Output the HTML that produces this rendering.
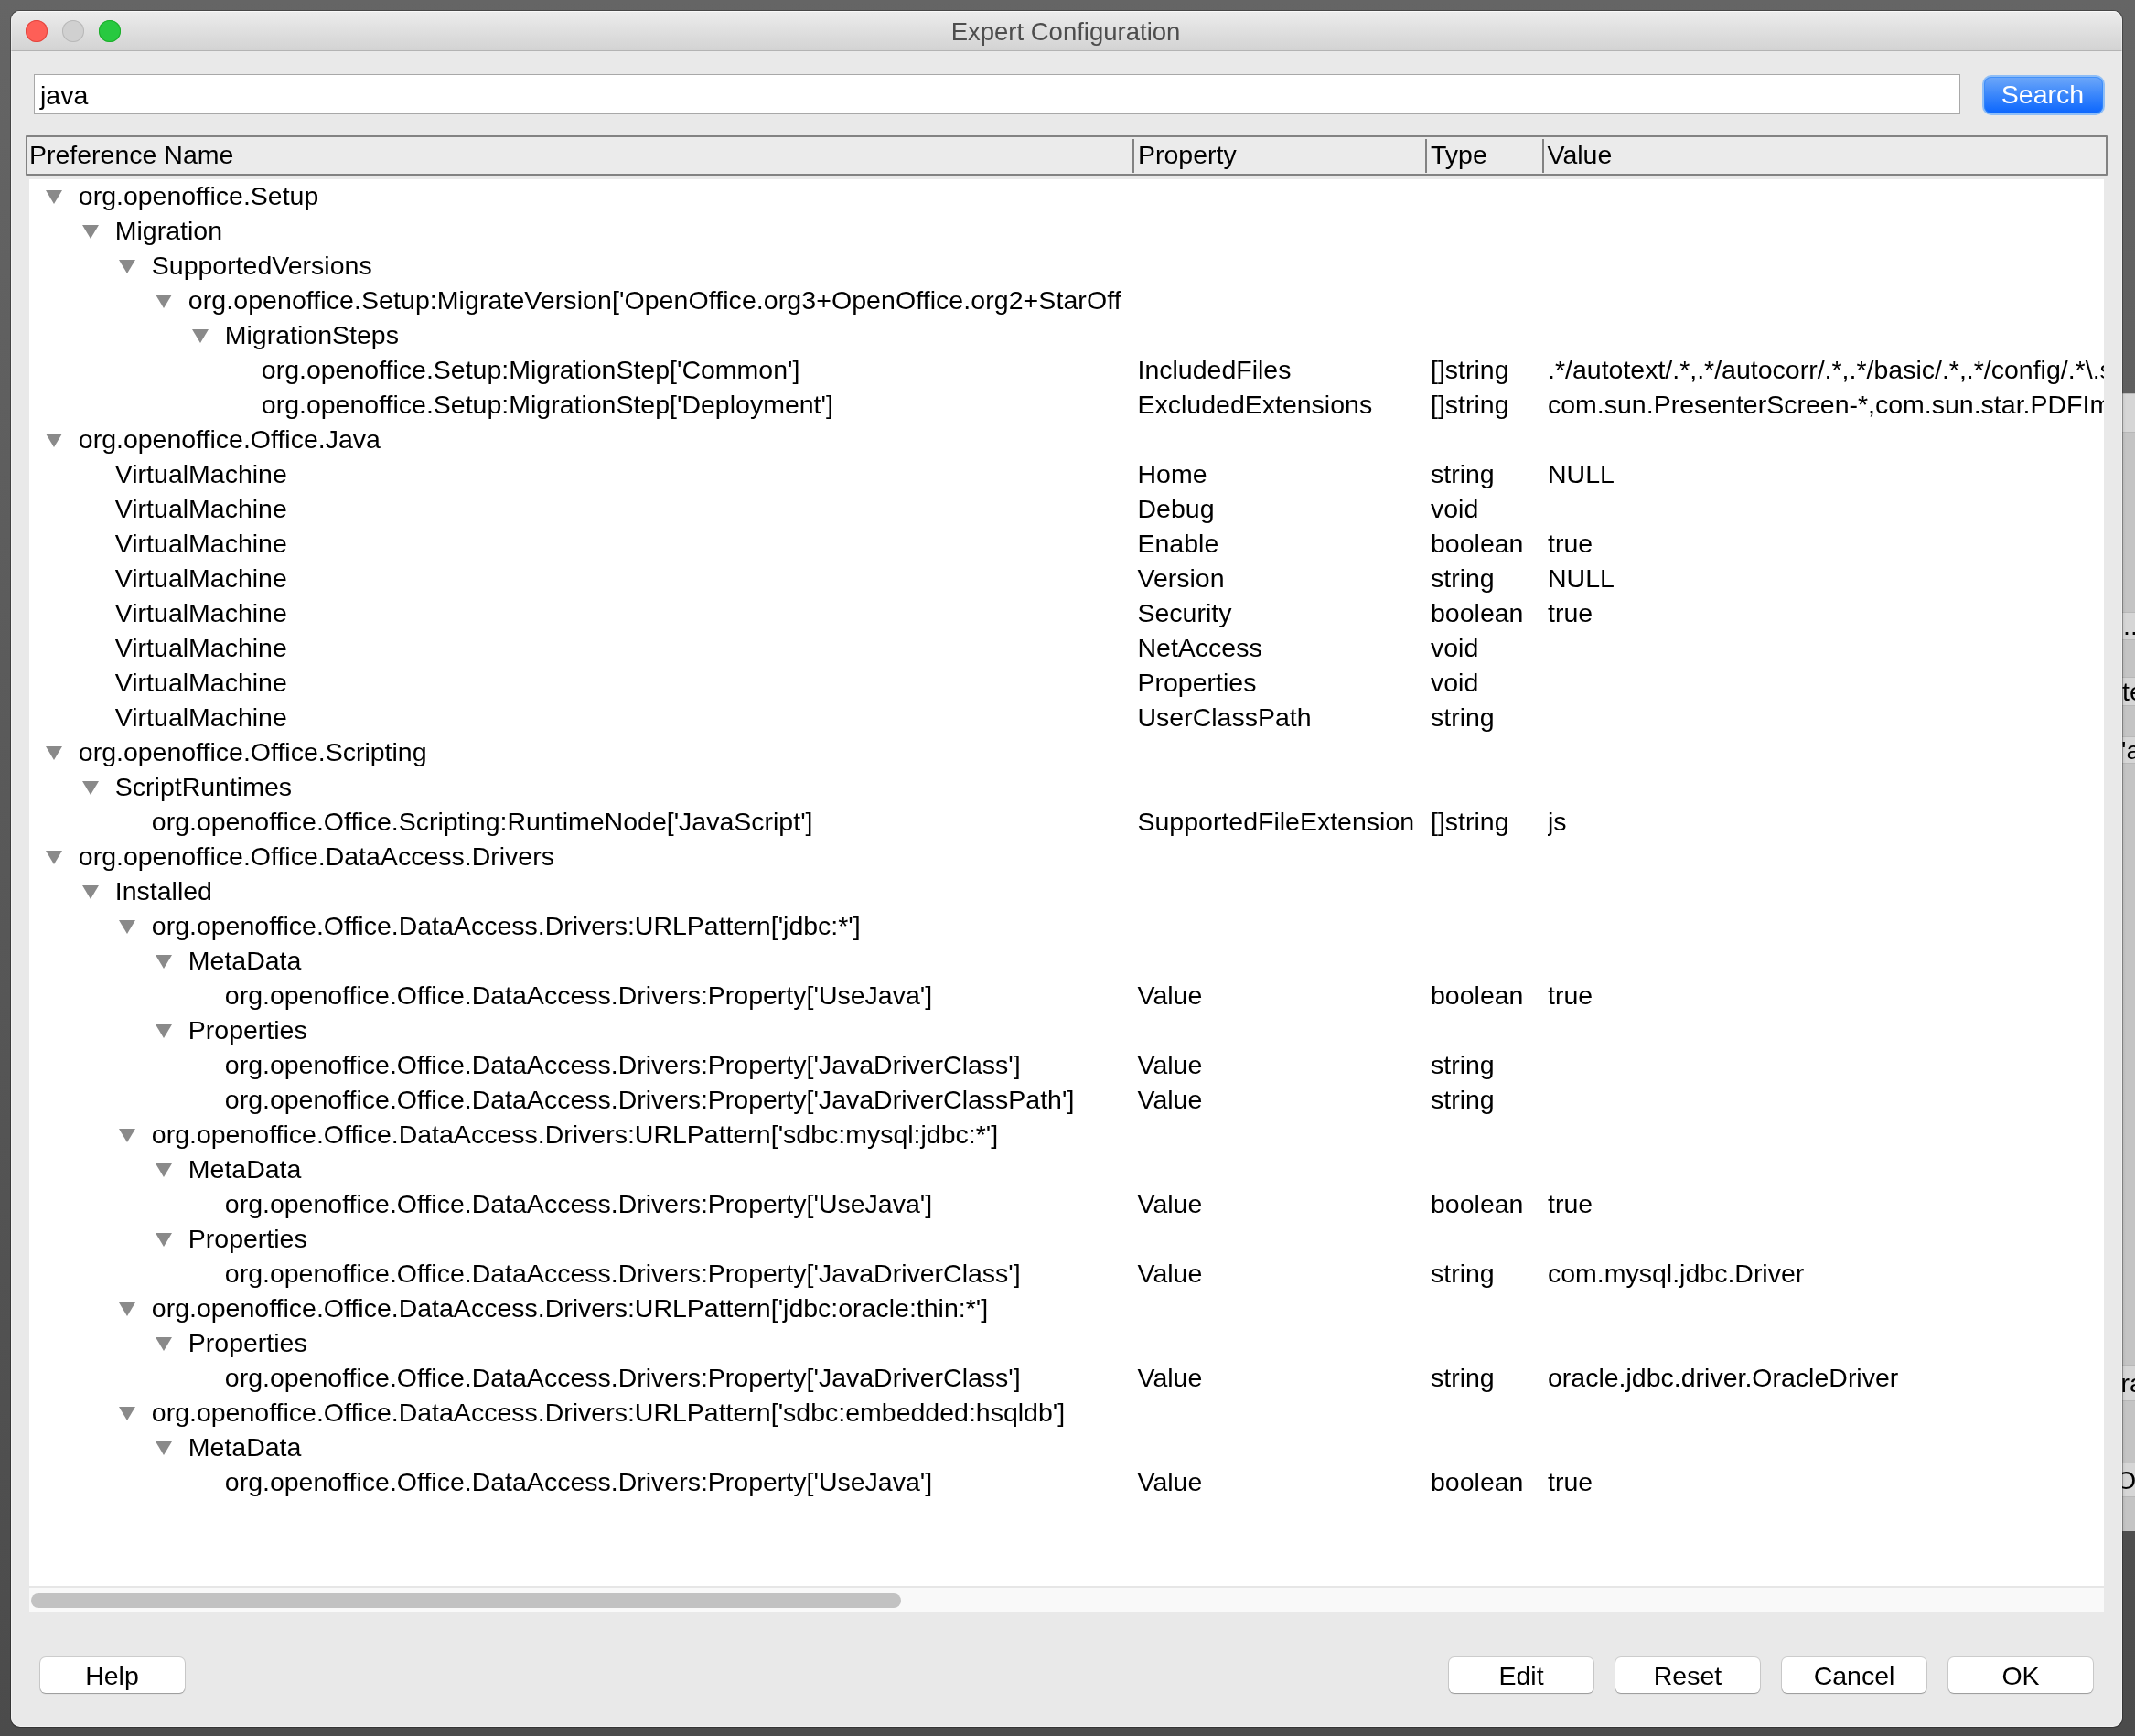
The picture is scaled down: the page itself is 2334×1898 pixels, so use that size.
<!DOCTYPE html>
<html><head><meta charset="utf-8"><style>
*{margin:0;padding:0;box-sizing:border-box}
html,body{width:2334px;height:1898px;overflow:hidden}
body{will-change:transform;position:relative;background:linear-gradient(#656565,#4b4b4b);font-family:"Liberation Sans",sans-serif;color:#000}
.a{position:absolute}
#win{will-change:transform;position:absolute;left:12px;top:12px;width:2308px;height:1876px;border-radius:10px;background:#e9e9e9;box-shadow:0 0 0 1px rgba(0,0,0,.3);overflow:hidden}
#tb{position:absolute;left:0;top:0;width:2308px;height:44px;background:linear-gradient(#ececec,#d3d3d3);border-bottom:1px solid #b3b3b3;box-shadow:inset 0 1px 0 #f6f6f6}
.tl{position:absolute;top:10px;width:24px;height:24px;border-radius:50%}
#title{position:absolute;left:-1px;width:2308px;top:1px;text-align:center;font-size:27.5px;color:#4d4d4d;line-height:44px;white-space:pre}
.txt{position:absolute;white-space:pre;font-size:28.5px;line-height:38px;height:38px}
.tri{position:absolute;width:0;height:0;border-left:9px solid transparent;border-right:9px solid transparent;border-top:15.5px solid #8a8a8a}
.btn{position:absolute;top:1800px;width:158px;height:39px;padding-top:1px;border-radius:6px;background:#fff;box-shadow:0 0 0 1px rgba(0,0,0,0.12),0 1px 1px rgba(0,0,0,0.25);font-size:28.5px;line-height:39px;text-align:center;white-space:pre}
</style></head><body>

<div class="a" style="left:2300px;top:430px;width:34px;height:1244px;background:#c4c4c4"></div>
<div class="a" style="left:2300px;top:430px;width:34px;height:43px;background:#d6d6d6;border-top:1px solid #b8b8b8;border-bottom:1px solid #b8b8b8"></div>
<div class="a" style="left:2300px;top:669px;width:34px;height:31px;background:#d6d6d6;border-top:1px solid #b8b8b8;border-bottom:1px solid #b8b8b8"></div>
<div class="txt" style="left:2321px;top:665.0px">...</div>
<div class="a" style="left:2300px;top:740px;width:34px;height:32px;background:#d6d6d6;border-top:1px solid #b8b8b8;border-bottom:1px solid #b8b8b8"></div>
<div class="txt" style="left:2320px;top:736.5px">te</div>
<div class="a" style="left:2300px;top:805px;width:34px;height:30px;background:#d6d6d6;border-top:1px solid #b8b8b8;border-bottom:1px solid #b8b8b8"></div>
<div class="txt" style="left:2319px;top:800.5px">'a</div>
<div class="a" style="left:2300px;top:1492px;width:34px;height:40px;background:#d6d6d6;border-top:1px solid #b8b8b8;border-bottom:1px solid #b8b8b8"></div>
<div class="txt" style="left:2318.5px;top:1492.5px">ra</div>
<div class="a" style="left:2300px;top:1599px;width:34px;height:38px;background:#d6d6d6;border-top:1px solid #b8b8b8;border-bottom:1px solid #b8b8b8"></div>
<div class="txt" style="left:2313px;top:1598.5px">O</div>
<div class="a" style="left:2320px;top:430px;width:4px;height:1244px;background:linear-gradient(90deg,rgba(0,0,0,.08),rgba(0,0,0,0))"></div>
<div id="win">
<div id="tb"><div class="tl" style="left:16px;background:#fe5f57;box-shadow:inset 0 0 0 1px #e2463f"></div><div class="tl" style="left:56px;background:#d0d0d0;box-shadow:inset 0 0 0 1px #b8b8b8"></div><div class="tl" style="left:96px;background:#28c940;box-shadow:inset 0 0 0 1px #1dad2b"></div><div id="title">Expert Configuration</div></div>
<div class="a" style="left:25px;top:69px;width:2106px;height:44px;background:#fff;border:1px solid #a8a8a8"></div>
<div class="txt" style="left:32px;top:73px">java</div>
<div class="a" style="left:2155px;top:70px;width:134px;height:44px;border-radius:10px;background:#8fbef7;padding:2px"><div style="width:130px;height:40px;border-radius:8px;background:linear-gradient(#6ea8f9,#3a86fb 50%,#0b66fe);color:#fff;font-size:28.5px;line-height:38px;text-align:center;text-indent:-2px;box-shadow:inset 0 0 0 1px rgba(50,135,250,.7)">Search</div></div>
<div class="a" style="left:16px;top:136px;width:2276px;height:44px;background:#ebebeb;border:2px solid #828282;border-radius:1px"></div>
<div class="a" style="left:1225.8px;top:139.5px;width:2px;height:37px;background:#828282"></div>
<div class="a" style="left:1545.8px;top:139.5px;width:2px;height:37px;background:#828282"></div>
<div class="a" style="left:1673.6px;top:139.5px;width:2px;height:37px;background:#828282"></div>
<div class="txt" style="left:20px;top:138px">Preference Name</div>
<div class="txt" style="left:1232px;top:138px">Property</div>
<div class="txt" style="left:1552px;top:138px">Type</div>
<div class="txt" style="left:1679.5px;top:138px">Value</div>
<div class="a" style="left:20px;top:183.6px;width:2268px;height:1538.4px;background:#fff;overflow:hidden">
<div class="tri" style="left:18px;top:12.400000000000006px"></div>
<div class="txt" style="left:53.8px;top:-0.5999999999999943px;width:1140.2px;overflow:hidden;">org.openoffice.Setup</div>
<div class="tri" style="left:58px;top:50.400000000000006px"></div>
<div class="txt" style="left:93.8px;top:37.400000000000006px;width:1100.2px;overflow:hidden;">Migration</div>
<div class="tri" style="left:98px;top:88.4px"></div>
<div class="txt" style="left:133.8px;top:75.4px;width:1060.2px;overflow:hidden;">SupportedVersions</div>
<div class="tri" style="left:138px;top:126.4px"></div>
<div class="txt" style="left:173.8px;top:113.4px;width:1020.2px;overflow:hidden;letter-spacing:0.075px;">org.openoffice.Setup:MigrateVersion[&#x27;OpenOffice.org3+OpenOffice.org2+StarOff</div>
<div class="tri" style="left:178px;top:164.4px"></div>
<div class="txt" style="left:213.8px;top:151.4px;width:980.2px;overflow:hidden;">MigrationSteps</div>
<div class="txt" style="left:253.8px;top:189.4px;width:940.2px;overflow:hidden;">org.openoffice.Setup:MigrationStep[&#x27;Common&#x27;]</div>
<div class="txt" style="left:1211.5px;top:189.4px">IncludedFiles</div>
<div class="txt" style="left:1532px;top:189.4px">[]string</div>
<div class="txt" style="left:1660px;top:189.4px;width:608px;overflow:hidden">.*/autotext/.*,.*/autocorr/.*,.*/basic/.*,.*/config/.*\.soc,.*/config/.*\.sod</div>
<div class="txt" style="left:253.8px;top:227.4px;width:940.2px;overflow:hidden;">org.openoffice.Setup:MigrationStep[&#x27;Deployment&#x27;]</div>
<div class="txt" style="left:1211.5px;top:227.4px">ExcludedExtensions</div>
<div class="txt" style="left:1532px;top:227.4px">[]string</div>
<div class="txt" style="left:1660px;top:227.4px;width:608px;overflow:hidden">com.sun.PresenterScreen-*,com.sun.star.PDFImport-*</div>
<div class="tri" style="left:18px;top:278.4px"></div>
<div class="txt" style="left:53.8px;top:265.4px;width:1140.2px;overflow:hidden;">org.openoffice.Office.Java</div>
<div class="txt" style="left:93.8px;top:303.4px;width:1100.2px;overflow:hidden;">VirtualMachine</div>
<div class="txt" style="left:1211.5px;top:303.4px">Home</div>
<div class="txt" style="left:1532px;top:303.4px">string</div>
<div class="txt" style="left:1660px;top:303.4px;width:608px;overflow:hidden">NULL</div>
<div class="txt" style="left:93.8px;top:341.4px;width:1100.2px;overflow:hidden;">VirtualMachine</div>
<div class="txt" style="left:1211.5px;top:341.4px">Debug</div>
<div class="txt" style="left:1532px;top:341.4px">void</div>
<div class="txt" style="left:93.8px;top:379.4px;width:1100.2px;overflow:hidden;">VirtualMachine</div>
<div class="txt" style="left:1211.5px;top:379.4px">Enable</div>
<div class="txt" style="left:1532px;top:379.4px">boolean</div>
<div class="txt" style="left:1660px;top:379.4px;width:608px;overflow:hidden">true</div>
<div class="txt" style="left:93.8px;top:417.4px;width:1100.2px;overflow:hidden;">VirtualMachine</div>
<div class="txt" style="left:1211.5px;top:417.4px">Version</div>
<div class="txt" style="left:1532px;top:417.4px">string</div>
<div class="txt" style="left:1660px;top:417.4px;width:608px;overflow:hidden">NULL</div>
<div class="txt" style="left:93.8px;top:455.4px;width:1100.2px;overflow:hidden;">VirtualMachine</div>
<div class="txt" style="left:1211.5px;top:455.4px">Security</div>
<div class="txt" style="left:1532px;top:455.4px">boolean</div>
<div class="txt" style="left:1660px;top:455.4px;width:608px;overflow:hidden">true</div>
<div class="txt" style="left:93.8px;top:493.4px;width:1100.2px;overflow:hidden;">VirtualMachine</div>
<div class="txt" style="left:1211.5px;top:493.4px">NetAccess</div>
<div class="txt" style="left:1532px;top:493.4px">void</div>
<div class="txt" style="left:93.8px;top:531.4px;width:1100.2px;overflow:hidden;">VirtualMachine</div>
<div class="txt" style="left:1211.5px;top:531.4px">Properties</div>
<div class="txt" style="left:1532px;top:531.4px">void</div>
<div class="txt" style="left:93.8px;top:569.4px;width:1100.2px;overflow:hidden;">VirtualMachine</div>
<div class="txt" style="left:1211.5px;top:569.4px">UserClassPath</div>
<div class="txt" style="left:1532px;top:569.4px">string</div>
<div class="tri" style="left:18px;top:620.4px"></div>
<div class="txt" style="left:53.8px;top:607.4px;width:1140.2px;overflow:hidden;">org.openoffice.Office.Scripting</div>
<div class="tri" style="left:58px;top:658.4px"></div>
<div class="txt" style="left:93.8px;top:645.4px;width:1100.2px;overflow:hidden;">ScriptRuntimes</div>
<div class="txt" style="left:133.8px;top:683.4px;width:1060.2px;overflow:hidden;">org.openoffice.Office.Scripting:RuntimeNode[&#x27;JavaScript&#x27;]</div>
<div class="txt" style="left:1211.5px;top:683.4px">SupportedFileExtension</div>
<div class="txt" style="left:1532px;top:683.4px">[]string</div>
<div class="txt" style="left:1660px;top:683.4px;width:608px;overflow:hidden">js</div>
<div class="tri" style="left:18px;top:734.4px"></div>
<div class="txt" style="left:53.8px;top:721.4px;width:1140.2px;overflow:hidden;">org.openoffice.Office.DataAccess.Drivers</div>
<div class="tri" style="left:58px;top:772.4px"></div>
<div class="txt" style="left:93.8px;top:759.4px;width:1100.2px;overflow:hidden;">Installed</div>
<div class="tri" style="left:98px;top:810.4px"></div>
<div class="txt" style="left:133.8px;top:797.4px;width:1060.2px;overflow:hidden;">org.openoffice.Office.DataAccess.Drivers:URLPattern[&#x27;jdbc:*&#x27;]</div>
<div class="tri" style="left:138px;top:848.4px"></div>
<div class="txt" style="left:173.8px;top:835.4px;width:1020.2px;overflow:hidden;">MetaData</div>
<div class="txt" style="left:213.8px;top:873.4px;width:980.2px;overflow:hidden;">org.openoffice.Office.DataAccess.Drivers:Property[&#x27;UseJava&#x27;]</div>
<div class="txt" style="left:1211.5px;top:873.4px">Value</div>
<div class="txt" style="left:1532px;top:873.4px">boolean</div>
<div class="txt" style="left:1660px;top:873.4px;width:608px;overflow:hidden">true</div>
<div class="tri" style="left:138px;top:924.4px"></div>
<div class="txt" style="left:173.8px;top:911.4px;width:1020.2px;overflow:hidden;">Properties</div>
<div class="txt" style="left:213.8px;top:949.4px;width:980.2px;overflow:hidden;">org.openoffice.Office.DataAccess.Drivers:Property[&#x27;JavaDriverClass&#x27;]</div>
<div class="txt" style="left:1211.5px;top:949.4px">Value</div>
<div class="txt" style="left:1532px;top:949.4px">string</div>
<div class="txt" style="left:213.8px;top:987.4px;width:980.2px;overflow:hidden;">org.openoffice.Office.DataAccess.Drivers:Property[&#x27;JavaDriverClassPath&#x27;]</div>
<div class="txt" style="left:1211.5px;top:987.4px">Value</div>
<div class="txt" style="left:1532px;top:987.4px">string</div>
<div class="tri" style="left:98px;top:1038.4px"></div>
<div class="txt" style="left:133.8px;top:1025.4px;width:1060.2px;overflow:hidden;">org.openoffice.Office.DataAccess.Drivers:URLPattern[&#x27;sdbc:mysql:jdbc:*&#x27;]</div>
<div class="tri" style="left:138px;top:1076.4px"></div>
<div class="txt" style="left:173.8px;top:1063.4px;width:1020.2px;overflow:hidden;">MetaData</div>
<div class="txt" style="left:213.8px;top:1101.4px;width:980.2px;overflow:hidden;">org.openoffice.Office.DataAccess.Drivers:Property[&#x27;UseJava&#x27;]</div>
<div class="txt" style="left:1211.5px;top:1101.4px">Value</div>
<div class="txt" style="left:1532px;top:1101.4px">boolean</div>
<div class="txt" style="left:1660px;top:1101.4px;width:608px;overflow:hidden">true</div>
<div class="tri" style="left:138px;top:1152.4px"></div>
<div class="txt" style="left:173.8px;top:1139.4px;width:1020.2px;overflow:hidden;">Properties</div>
<div class="txt" style="left:213.8px;top:1177.4px;width:980.2px;overflow:hidden;">org.openoffice.Office.DataAccess.Drivers:Property[&#x27;JavaDriverClass&#x27;]</div>
<div class="txt" style="left:1211.5px;top:1177.4px">Value</div>
<div class="txt" style="left:1532px;top:1177.4px">string</div>
<div class="txt" style="left:1660px;top:1177.4px;width:608px;overflow:hidden">com.mysql.jdbc.Driver</div>
<div class="tri" style="left:98px;top:1228.4px"></div>
<div class="txt" style="left:133.8px;top:1215.4px;width:1060.2px;overflow:hidden;">org.openoffice.Office.DataAccess.Drivers:URLPattern[&#x27;jdbc:oracle:thin:*&#x27;]</div>
<div class="tri" style="left:138px;top:1266.4px"></div>
<div class="txt" style="left:173.8px;top:1253.4px;width:1020.2px;overflow:hidden;">Properties</div>
<div class="txt" style="left:213.8px;top:1291.4px;width:980.2px;overflow:hidden;">org.openoffice.Office.DataAccess.Drivers:Property[&#x27;JavaDriverClass&#x27;]</div>
<div class="txt" style="left:1211.5px;top:1291.4px">Value</div>
<div class="txt" style="left:1532px;top:1291.4px">string</div>
<div class="txt" style="left:1660px;top:1291.4px;width:608px;overflow:hidden">oracle.jdbc.driver.OracleDriver</div>
<div class="tri" style="left:98px;top:1342.4px"></div>
<div class="txt" style="left:133.8px;top:1329.4px;width:1060.2px;overflow:hidden;">org.openoffice.Office.DataAccess.Drivers:URLPattern[&#x27;sdbc:embedded:hsqldb&#x27;]</div>
<div class="tri" style="left:138px;top:1380.4px"></div>
<div class="txt" style="left:173.8px;top:1367.4px;width:1020.2px;overflow:hidden;">MetaData</div>
<div class="txt" style="left:213.8px;top:1405.4px;width:980.2px;overflow:hidden;">org.openoffice.Office.DataAccess.Drivers:Property[&#x27;UseJava&#x27;]</div>
<div class="txt" style="left:1211.5px;top:1405.4px">Value</div>
<div class="txt" style="left:1532px;top:1405.4px">boolean</div>
<div class="txt" style="left:1660px;top:1405.4px;width:608px;overflow:hidden">true</div>
</div>
<div class="a" style="left:20px;top:1722px;width:2268px;height:28px;background:#f9f9f9;border-top:2px solid #e6e6e6"></div>
<div class="a" style="left:22px;top:1730px;width:951px;height:16px;border-radius:8px;background:#c2c2c2"></div>
<div class="btn" style="left:31.5px">Help</div>
<div class="btn" style="left:1572px">Edit</div>
<div class="btn" style="left:1754px">Reset</div>
<div class="btn" style="left:1936px">Cancel</div>
<div class="btn" style="left:2118px">OK</div>
<div class="a" style="left:0;top:0;width:2308px;height:1876px;border-radius:10px;border:1px solid rgba(255,255,255,.4)"></div>
</div></body></html>
